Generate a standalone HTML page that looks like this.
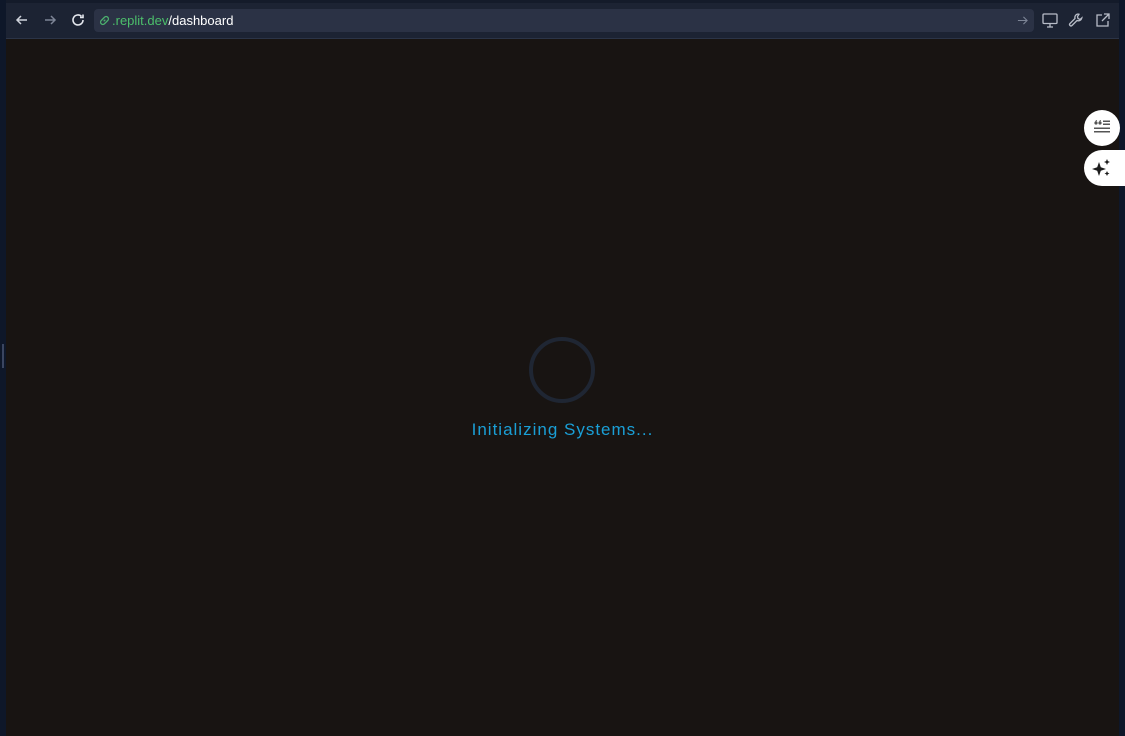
<!DOCTYPE html>
<html><head><style>
body{margin:0;width:1125px;height:736px;background:#0e1729;position:relative;overflow:hidden;font-family:"Liberation Sans",sans-serif}
.top{position:absolute;left:6px;top:0;width:1113px;height:38px;background:#1c2333;border-bottom:1px solid #2b3447}
.tabs{position:absolute;left:6px;top:0;width:1113px;height:3px;background:#141b2a}
.url{position:absolute;left:94px;top:9px;width:940px;height:23px;background:#2b3245;border-radius:4px}
.url span{position:absolute;left:18px;top:4px;font-size:13px;color:#fff}
.main{position:absolute;left:6px;top:39px;width:1113px;height:697px;background:#181412}
.ring{position:absolute;left:529px;top:337px;width:58px;height:58px;border:4px solid #1f2633;border-radius:50%}
.txt{position:absolute;left:0;width:1125px;top:420px;text-align:center;color:#1a9fd6;font-size:17px;letter-spacing:1px}
.btn{position:absolute;background:#fff}
.handle{position:absolute;left:2px;top:344px;width:2px;height:24px;background:#3a4560}
</style></head><body>
<div class="main"></div>
<div class="handle"></div>
<div class="top"></div>
<div class="tabs"></div>
<svg style="position:absolute;left:14px;top:12px" width="16" height="16" viewBox="0 0 16 16" fill="none" stroke="#cfd3dc" stroke-width="1.5"><path d="M13 8H3M7 4L3 8l4 4"/></svg>
<svg style="position:absolute;left:42px;top:12px" width="16" height="16" viewBox="0 0 16 16" fill="none" stroke="#7d8596" stroke-width="1.5"><path d="M3 8h10M9 4l4 4-4 4"/></svg>
<svg style="position:absolute;left:70px;top:12px" width="16" height="16" viewBox="0 0 16 16" fill="none" stroke="#e4e7ee" stroke-width="1.6"><path d="M13 8a5 5 0 1 1-1.5-3.6M13 2.5v3h-3"/></svg>
<div class="url"><svg style="position:absolute;left:4px;top:5px" width="13" height="13" viewBox="0 0 16 16" fill="none" stroke="#4caf6e" stroke-width="1.6"><path d="M7 9l2-2M6 6L4 8a2.5 2.5 0 0 0 4 4l2-2M10 10l2-2a2.5 2.5 0 0 0-4-4L6 6"/></svg><span><span style="position:static;color:#4cbf6b">.replit.dev</span>/dashboard</span>
<svg style="position:absolute;right:6px;top:6px" width="11" height="11" viewBox="0 0 12 12" fill="none" stroke="#7d8596" stroke-width="1.2"><path d="M1 6h10M7 2l4 4-4 4"/></svg></div>
<svg style="position:absolute;left:1042px;top:13px" width="16" height="15" viewBox="0 0 16 15" fill="none" stroke="#b8bdc8" stroke-width="1.3"><rect x="1" y="1" width="14" height="9.5" rx="1"/><path d="M8 11v2.5M5 14h6"/></svg>
<svg style="position:absolute;left:1068px;top:12px" width="16" height="16" viewBox="0 0 16 16" fill="none" stroke="#b8bdc8" stroke-width="1.3"><path d="M10 2a3.5 3.5 0 0 0-3 4.5L2 11.5a1.4 1.4 0 0 0 2 2l5-5A3.5 3.5 0 0 0 13.8 6L12 7.5 10 6.5 9.5 4.5 11 2.3z"/></svg>
<svg style="position:absolute;left:1095px;top:13px" width="15" height="15" viewBox="0 0 15 15" fill="none" stroke="#b8bdc8" stroke-width="1.3"><path d="M7 2H2v11h11V8M9 1h5v5M14 1L7 8"/></svg>
<div class="ring"></div>
<div class="txt">Initializing Systems...</div>
<div class="btn" style="left:1084px;top:110px;width:36px;height:36px;border-radius:50%"></div>
<svg style="position:absolute;left:1093px;top:119px" width="18" height="18" viewBox="0 0 18 18" fill="#555"><circle cx="3" cy="4" r="1.6"/><circle cx="7" cy="4" r="1.6"/><path d="M1.6 4L3 1h1L2.8 4zM5.6 4L7 1h1L6.8 4z"/><rect x="10" y="1.5" width="7" height="1.5"/><rect x="10" y="4.5" width="7" height="1.5"/><rect x="1" y="8.5" width="16" height="1.5"/><rect x="1" y="12" width="16" height="1.5"/></svg>
<div class="btn" style="left:1084px;top:150px;width:50px;height:36px;border-radius:18px 0 0 18px"></div>
<svg style="position:absolute;left:1092px;top:158px" width="20" height="20" viewBox="0 0 20 20" fill="#1c1c1c"><path d="M7 4l1.8 5.2L14 11l-5.2 1.8L7 18l-1.8-5.2L0 11l5.2-1.8z"/><path d="M15 1l.9 2.1L18 4l-2.1.9L15 7l-.9-2.1L12 4l2.1-.9z"/><path d="M15 13l.8 1.7 1.7.8-1.7.8-.8 1.7-.8-1.7-1.7-.8 1.7-.8z"/></svg>
</body></html>
